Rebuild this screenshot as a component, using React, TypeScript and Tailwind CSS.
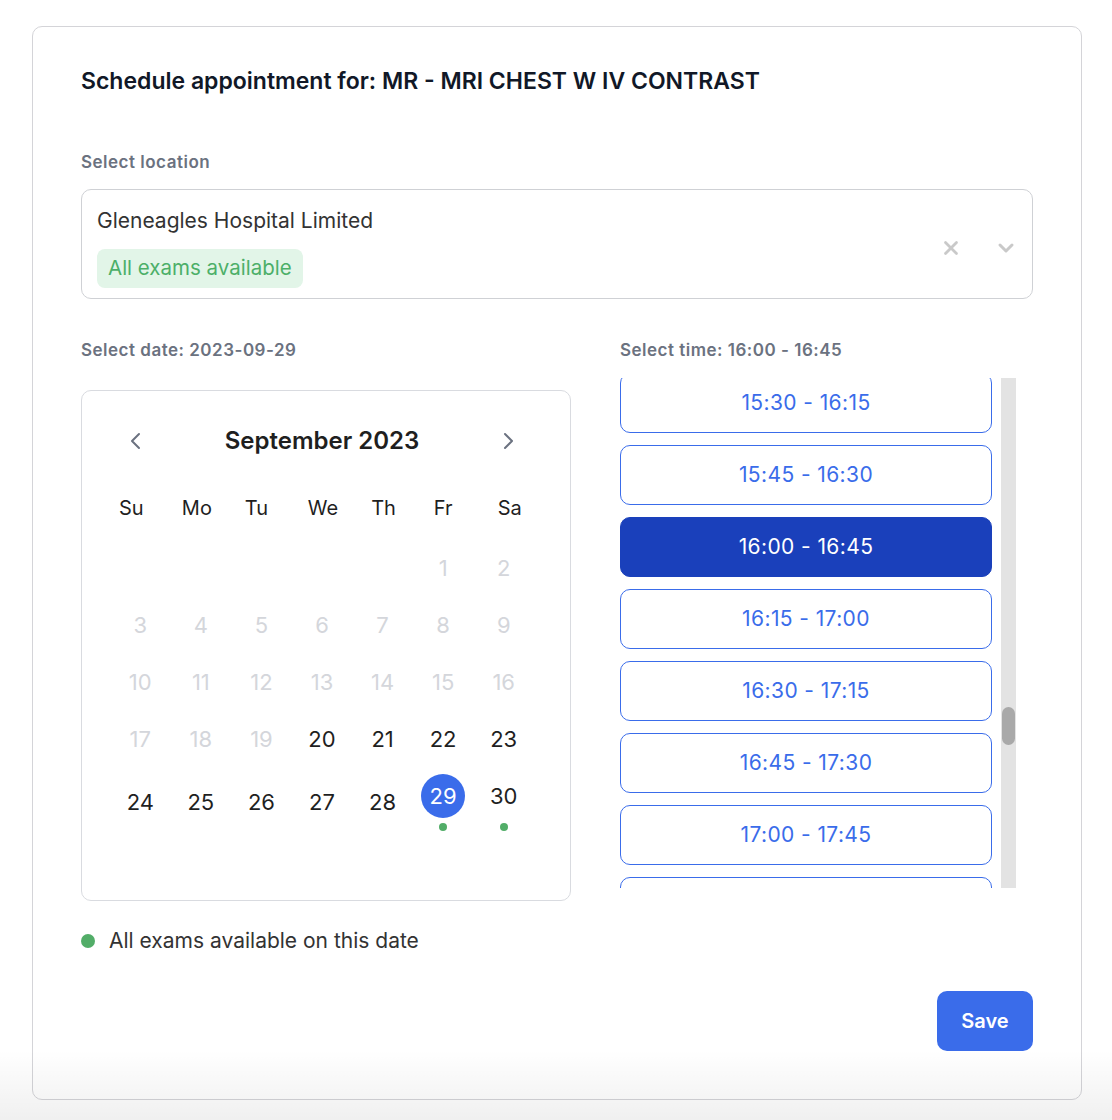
import { X, ChevronDown } from "lucide-react";

const weekdays = ["Su", "Mo", "Tu", "We", "Th", "Fr", "Sa"];
// header labels sit a little off the day columns in the original
const weekdayShift = [
  "-translate-x-[9px]",
  "-translate-x-[4px]",
  "-translate-x-[5px]",
  "translate-x-[1px]",
  "translate-x-[1px]",
  "",
  "translate-x-[6px]",
];

const slots = [
  "15:30 - 16:15",
  "15:45 - 16:30",
  "16:00 - 16:45",
  "16:15 - 17:00",
  "16:30 - 17:15",
  "16:45 - 17:30",
  "17:00 - 17:45",
  "17:15 - 18:00",
];

const selectedSlot = "16:00 - 16:45";
const selectedDay = 29;
const availableDays = [29, 30];

const Arrow = ({ dir }: { dir: "left" | "right" }) => (
  <svg width="12" height="20" viewBox="0 0 12 20" fill="none" stroke="#6b7280" strokeWidth="2" strokeLinecap="round" strokeLinejoin="round">
    {dir === "left" ? <polyline points="9,3 2,10 9,17" /> : <polyline points="3,3 10,10 3,17" />}
  </svg>
);

const Calendar = () => {
  // september 2023 starts on a friday
  const cells: (number | null)[] = [null, null, null, null, null];
  for (let d = 1; d <= 30; d++) cells.push(d);
  const rows: (number | null)[][] = [];
  for (let i = 0; i < cells.length; i += 7) rows.push(cells.slice(i, i + 7));

  return (
    <div className="h-[511px] rounded-[10px] border border-[#d9dbe0] pt-[30px]">
      <div className="ml-[28px] w-[424px]">
        <div className="flex h-[40px] items-center justify-between px-[20px]">
          <Arrow dir="left" />
          <div className="text-[24px] font-semibold text-[#1f1f1f]">September 2023</div>
          <Arrow dir="right" />
        </div>
      </div>
      <div className="ml-[28px] mt-[32px] grid h-[28px] w-[424px] grid-cols-7 items-center text-[20px] text-[#1f1f1f]">
        {weekdays.map((w, i) => (
          <span key={w} className={"text-center " + weekdayShift[i]}>
            {w}
          </span>
        ))}
      </div>
      <div className="ml-[28px] mt-[25px] flex w-[424px] flex-col gap-[13px]">
        {rows.map((row, ri) => (
          <div key={ri} className="grid grid-cols-7 items-center">
            {row.map((d, ci) => {
              if (d === null) return <div key={ci} className="h-[44px]" />;
              const disabled = d < 20;
              const selected = d === selectedDay;
              const dot = availableDays.includes(d);
              return (
                <div key={ci} className="flex flex-col items-center">
                  <div
                    className={
                      "flex h-[44px] w-[44px] items-center justify-center rounded-full text-[22px] " +
                      (selected ? "bg-[#3a6cea] text-white" : disabled ? "text-[#d4d6db]" : "text-[#1f1f1f]")
                    }
                  >
                    {d}
                  </div>
                  {dot && <div className="mt-[5px] h-[8px] w-[8px] rounded-full bg-[#52ad68]" />}
                </div>
              );
            })}
          </div>
        ))}
      </div>
    </div>
  );
};

const App = () => {
  return (
    <div className="relative h-[1120px] overflow-hidden bg-white pt-[26px] font-['Inter',sans-serif]">
      <div className="ml-[32px] w-[1050px] rounded-[10px] border border-[#d4d4d8] px-[48px] pb-[48px] pt-[40px]">
        <h1 className="text-[23px] font-semibold leading-[28px] text-[#111827]">
          Schedule appointment for: MR - MRI CHEST W IV CONTRAST
        </h1>

        <div className="mt-[55px] text-[17px] font-semibold leading-[24px] tracking-[0.5px] text-[#6b7280]">
          Select location
        </div>
        <div className="mt-[15px] flex items-center rounded-[10px] border border-[#cfd1d5] pb-[10px] pl-[15px] pr-[14px] pt-[17px]">
          <div className="flex-1">
            <div className="text-[21px] leading-[28px] text-[#333333]">Gleneagles Hospital Limited</div>
            <div className="mt-[14px] inline-flex h-[39px] items-center rounded-[8px] bg-[#e2f5e8] px-[11px] text-[20.5px] text-[#4caf68]">
              All exams available
            </div>
          </div>
          <X size={22} strokeWidth={3} className="text-[#c9c9c9]" />
          <ChevronDown size={24} strokeWidth={3} className="ml-[32px] text-[#c9c9c9]" />
        </div>

        <div className="mt-[39px] grid grid-cols-[490px_1fr] gap-x-[49px]">
          <div>
            <div className="text-[17px] font-semibold leading-[24px] tracking-[0.5px] text-[#6b7280]">
              Select date: 2023-09-29
            </div>
            <div className="mt-[28px]">
              <Calendar />
            </div>
            <div className="mt-[26px] flex h-[28px] items-center">
              <div className="h-[14px] w-[14px] rounded-full bg-[#52ad68]" />
              <span className="ml-[14px] text-[21px] text-[#333333]">All exams available on this date</span>
            </div>
          </div>

          <div>
            <div className="text-[17px] font-semibold leading-[24px] tracking-[0.5px] text-[#6b7280]">
              Select time: 16:00 - 16:45
            </div>
            <div className="mt-[16px] flex h-[510px] w-[396px] gap-[9px]">
              <div className="h-full w-[372px] overflow-hidden">
                <div className="-mt-[5px] flex flex-col gap-[12px]">
                  {slots.map((s) => (
                    <div
                      key={s}
                      className={
                        "flex h-[60px] shrink-0 items-center justify-center rounded-[10px] border text-[21px] tracking-[0.4px] " +
                        (s === selectedSlot
                          ? "border-[#1a40bb] bg-[#1a40bb] text-white"
                          : "border-[#3a6cea] bg-white text-[#3a6cea]")
                      }
                    >
                      {s}
                    </div>
                  ))}
                </div>
              </div>
              <div className="relative h-full w-[15px] bg-[#e3e3e3]">
                <div className="absolute left-[1px] top-[329px] h-[38px] w-[13px] rounded-full bg-[#a9a9a9]" />
              </div>
            </div>
          </div>
        </div>

        <div className="mt-[36px] flex justify-end">
          <button className="h-[60px] w-[96px] rounded-[10px] bg-[#3a6cea] text-[20px] font-semibold text-white">
            Save
          </button>
        </div>
      </div>
      <div className="pointer-events-none absolute bottom-0 left-0 right-0 h-[70px] bg-linear-to-b from-transparent to-black/[0.06]" />
    </div>
  );
};

export default App;
